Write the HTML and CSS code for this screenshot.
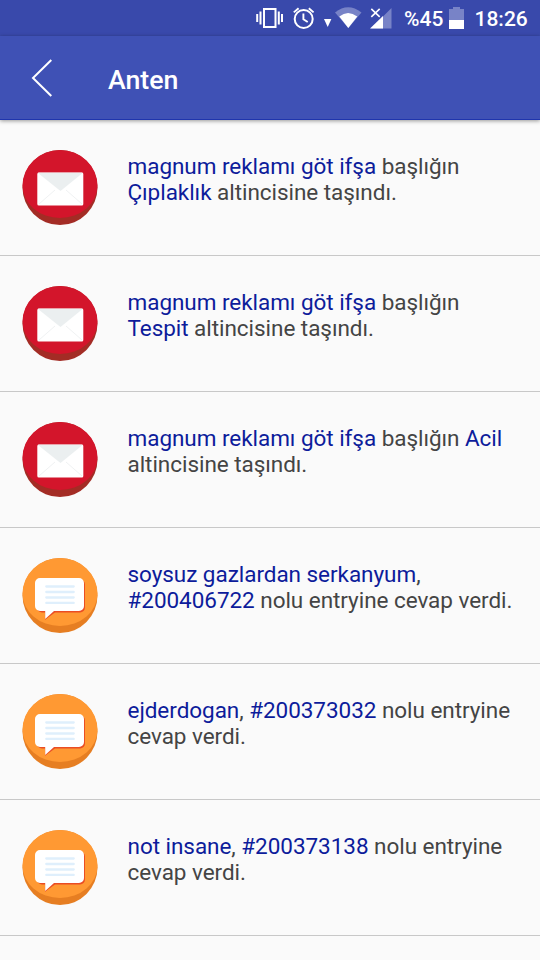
FILE: index.html
```html
<!DOCTYPE html>
<html lang="tr">
<head>
<meta charset="utf-8">
<title>Anten</title>
<link rel="stylesheet" href="styles.css">
</head>
<body>
<svg class="defs" aria-hidden="true">
  <symbol id="mail" viewBox="0 0.5 76 76">
    <circle cx="38" cy="38" r="37.500" fill="#a32c25"/>
    <path d="M.5 36a37.500 35.500 0 0 1 75 0A37.500 32.500 0 0 1 .5 36z" fill="#d3152b"/>
    <rect x="15.300" y="23" width="46" height="33" rx="1.500" fill="#fff"/>
    <path d="M17 54.500l16-14M60 54.500L44 40.500" stroke="#f0f2f3" stroke-width="1" fill="none"/>
    <path d="M15.700 23.200h45.200L38.500 41.400z" fill="#ebeff0"/>
  </symbol>
  <symbol id="chat" viewBox="0 0.5 76 76">
    <circle cx="38" cy="38" r="37.500" fill="#e67e22"/>
    <path d="M.5 36a37.500 35.500 0 0 1 75 0A37.500 32.500 0 0 1 .5 36z" fill="#ff9933"/>
    <path d="M20 22h38a5 5 0 0 1 5 5v23a5 5 0 0 1-5 5H33l-10 7.300V55h-3a5 5 0 0 1-5-5V27a5 5 0 0 1 5-5z" fill="#ea4d24"/>
    <path d="M18 20.500h39a5 5 0 0 1 5 5v23a5 5 0 0 1-5 5H32l-8.800 8V53.500H18a5 5 0 0 1-5-5v-23a5 5 0 0 1 5-5z" fill="#fff"/>
    <path d="M24.300 29h27.400M24.300 34.500h27.400M24.300 40h27.400M24.300 45.400h27.400" stroke="#dfeffc" stroke-width="2.300" stroke-linecap="round"/>
  </symbol>
</svg>
<div class="status">
  <svg class="indicators" width="136" height="36" viewBox="256 0 136 36">
    <path d="M264 9h11.500v18H264zM257.200 14v8M260.500 11.500v13M278.800 11.500v13M282 14v8" fill="none" stroke="#fff" stroke-width="2"/>
    <circle cx="303.700" cy="19" r="9" fill="none" stroke="#fff" stroke-width="2"/>
    <path d="M303.400 13.500v5.800l4.300 2.700M293.800 12.400l4.800-4.200M308.800 8.200l4.800 4.200" fill="none" stroke="#fff" stroke-width="1.900"/>
    <path d="M324 19h7.400l-3.700 8z" fill="#fff"/>
    <path d="M335 12.500Q348 2 361.500 12.500L348.300 28z" fill="#7883c7"/>
    <path d="M339.300 16.500Q348 9.500 357.300 16.500L348.300 28z" fill="#fff"/>
    <path d="M391.500 8v20.500H371z" fill="#7883c7"/>
    <path d="M383 16v12.500h-13z" fill="#fff"/>
    <path d="M371.300 8.800l8.400 8M379.700 8.800l-8.400 8" stroke="#fff" stroke-width="1.600"/>
  </svg>
  <span class="percent">%45</span>
  <svg class="battery" width="15" height="22" viewBox="0 0 15 22">
    <path d="M0 2h4V0h7v2h4v11H0z" fill="#7883c7"/>
    <path d="M0 13h15v9H0z" fill="#fff"/>
  </svg>
  <span class="clock">18:26</span>
</div>
<header class="bar">
  <svg class="back" width="22" height="38" viewBox="0 0 22 38"><path d="M20.300 1L2 19l18.300 18" fill="none" stroke="#fff" stroke-width="2"/></svg>
  <h1>Anten</h1>
</header>
<main>
  <div class="row"><svg class="icon"><use href="#mail"/></svg><p><b>magnum reklamı göt ifşa</b> başlığın<br><b>Çıplaklık</b> altincisine taşındı.</p></div>
  <div class="row"><svg class="icon"><use href="#mail"/></svg><p><b>magnum reklamı göt ifşa</b> başlığın<br><b>Tespit</b> altincisine taşındı.</p></div>
  <div class="row"><svg class="icon"><use href="#mail"/></svg><p><b>magnum reklamı göt ifşa</b> başlığın <b>Acil</b><br>altincisine taşındı.</p></div>
  <div class="row"><svg class="icon"><use href="#chat"/></svg><p><b>soysuz gazlardan serkanyum</b>,<br><b>#200406722</b> nolu entryine cevap verdi.</p></div>
  <div class="row"><svg class="icon"><use href="#chat"/></svg><p><b>ejderdogan</b>, <b>#200373032</b> nolu entryine<br>cevap verdi.</p></div>
  <div class="row"><svg class="icon"><use href="#chat"/></svg><p><b>not insane</b>, <b>#200373138</b> nolu entryine<br>cevap verdi.</p></div>
</main>
</body>
</html>
```
FILE: styles.css
```css
* { box-sizing: border-box; }
body {
  margin: 0;
  height: 960px;
  overflow: hidden;
  background: #fafafa;
  color: #444;
  font-family: Roboto, sans-serif;
}
.defs { position: absolute; width: 0; height: 0; }
.status {
  display: flex;
  height: 36px;
  padding-left: 256px;
  background: #3949ab;
  color: #fff;
  font-size: 21px;
  font-weight: 500;
  line-height: 38px;
  white-space: nowrap;
}
.percent { width: 57px; padding-left: 12px; }
.battery { margin-top: 7px; }
.clock { padding-left: 10.5px; }
.bar {
  display: flex;
  align-items: center;
  height: 84px;
  padding-left: 31px;
  background: #3f51b5;
  border-bottom: 1px solid #1f35ad;
  box-shadow: 0 1px 4px rgba(0, 0, 0, .4);
  color: #fff;
}
.bar h1 {
  margin: 4px 0 0 55px;
  font-size: 26.7px;
  font-weight: 500;
  line-height: 32px;
}
.row {
  display: flex;
  height: 136px;
  padding: 30px 0 0 22px;
  border-bottom: 1px solid #c8c8c8;
}
.icon { flex: none; width: 76px; height: 76px; }
.row p {
  margin: 3px 0 0 29.5px;
  font-size: 22.5px;
  letter-spacing: -.045px;
  line-height: 26px;
  white-space: nowrap;
}
.row b { color: #0d1c9b; font-weight: 400; }
```
